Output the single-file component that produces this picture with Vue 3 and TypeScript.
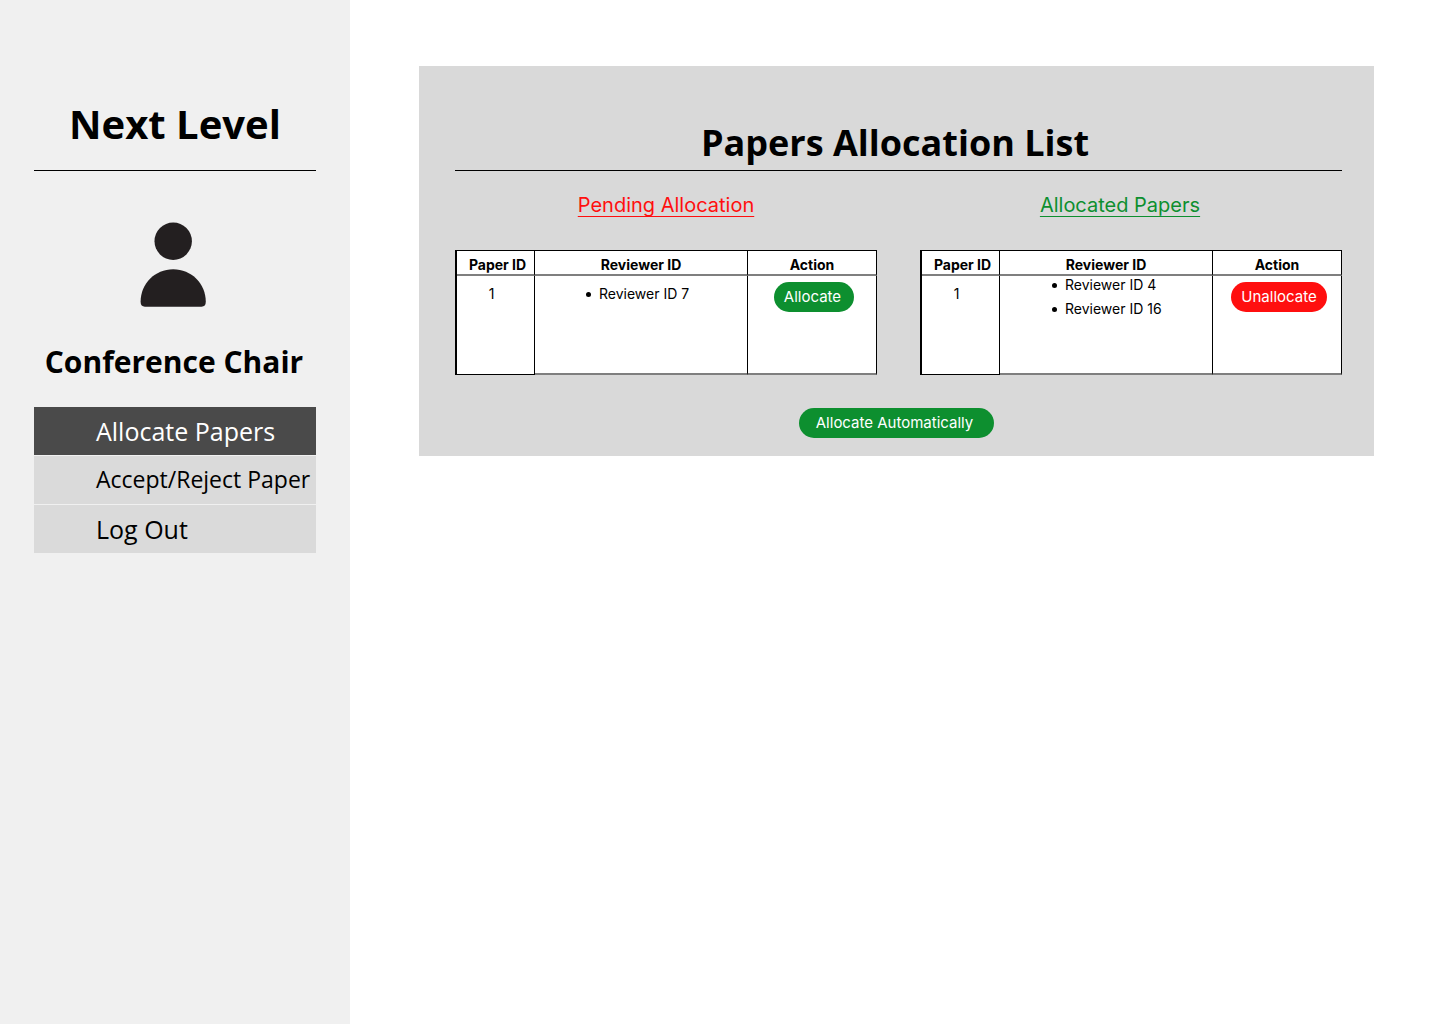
<script setup lang="ts">
import { ref } from 'vue'

interface NavItem {
  label: string
  size: 'regular' | 'compact'
}

interface PaperRow {
  paperId: number
  reviewers: string[]
}

interface AllocationTable {
  key: 'pending' | 'allocated'
  title: string
  action: string
  rows: PaperRow[]
}

const navItems: NavItem[] = [
  { label: 'Allocate Papers', size: 'regular' },
  { label: 'Accept/Reject Paper', size: 'compact' },
  { label: 'Log Out', size: 'regular' },
]
const active = ref('Allocate Papers')

const tables: AllocationTable[] = [
  {
    key: 'pending',
    title: 'Pending Allocation',
    action: 'Allocate',
    rows: [{ paperId: 1, reviewers: ['Reviewer ID 7'] }],
  },
  {
    key: 'allocated',
    title: 'Allocated Papers',
    action: 'Unallocate',
    rows: [{ paperId: 1, reviewers: ['Reviewer ID 4', 'Reviewer ID 16'] }],
  },
]
</script>

<template>
  <div class="layout">
    <aside class="sidebar">
      <h1 class="brand">Next Level</h1>
      <svg class="avatar" viewBox="0 0 66 85" aria-hidden="true">
        <circle cx="33.2" cy="19.2" r="18.7" />
        <path d="M0.600 79.800C0.600 61.500 15 47.200 33.200 47.200S65.800 61.500 65.800 79.800Q65.800 84.700 61.500 84.700H4.900Q0.600 84.700 0.600 79.800Z" />
      </svg>
      <p class="role">Conference Chair</p>
      <nav class="nav">
        <a
          v-for="item in navItems"
          :key="item.label"
          href="#"
          class="nav-link"
          :class="[item.size, { active: item.label === active }]"
          @click.prevent="active = item.label"
        >{{ item.label }}</a>
      </nav>
    </aside>

    <main class="main">
      <section class="panel">
        <h2 class="panel-title">Papers Allocation List</h2>
        <div class="columns">
          <div v-for="table in tables" :key="table.key" class="column" :class="table.key">
            <h3 :id="table.key" class="column-title">{{ table.title }}</h3>
            <table class="papers" :aria-labelledby="table.key">
              <thead>
                <tr>
                  <th class="paper">Paper ID</th>
                  <th class="reviewer">Reviewer ID</th>
                  <th class="action">Action</th>
                </tr>
              </thead>
              <tbody>
                <tr v-for="row in table.rows" :key="row.paperId">
                  <td class="paper">{{ row.paperId }}</td>
                  <td class="reviewer">
                    <ul class="reviewers">
                      <li v-for="name in row.reviewers" :key="name">{{ name }}</li>
                    </ul>
                  </td>
                  <td class="action">
                    <button type="button" class="pill">{{ table.action }}</button>
                  </td>
                </tr>
              </tbody>
            </table>
          </div>
        </div>
        <button type="button" class="pill auto">Allocate Automatically</button>
      </section>
    </main>
  </div>
</template>

<style>
body {
  margin: 0;
  background: #fff;
}
</style>

<style scoped>
.layout {
  display: flex;
  min-height: 100vh;
  color: #000;
  font-family: Inter, sans-serif;
}

h1,
h2,
h3,
p,
ul {
  margin: 0;
}

.sidebar {
  box-sizing: border-box;
  flex: 0 0 350px;
  padding: 96px 34px 0;
  background: #f0f0f0;
  font-family: 'Open Sans', sans-serif;
  text-align: center;
}

.brand {
  padding-bottom: 18px;
  border-bottom: 1px solid #000;
  font-size: 40px;
  font-weight: 700;
  line-height: 56px;
}

.avatar {
  display: block;
  width: 66px;
  height: 85px;
  margin: 51px auto 0;
  padding-right: 4px;
  fill: #231f20;
}

.role {
  margin-top: 34px;
  padding-right: 2px;
  font-size: 30px;
  font-weight: 700;
  line-height: 42px;
  white-space: nowrap;
}

.nav {
  display: flex;
  flex-direction: column;
  gap: 1px;
  margin-top: 24px;
}

.nav-link {
  padding-left: 62px;
  background: #dadada;
  color: #000;
  line-height: 48px;
  text-align: left;
  text-decoration: none;
  white-space: nowrap;
}

.nav-link.regular {
  font-size: 25px;
}

.nav-link.compact {
  padding-bottom: 2px;
  font-size: 23px;
  line-height: 46px;
}

.nav-link.active {
  background: #4a4a4a;
  color: #fff;
}

.main {
  flex: 1;
  min-width: 0;
  padding: 66px 66px 66px 69px;
}

.panel {
  display: flex;
  flex-direction: column;
  padding: 50px 32px 18px 36px;
  background: #d9d9d9;
}

.panel-title {
  padding: 2px 7px 2px 0;
  border-bottom: 1px solid #000;
  font-family: 'Open Sans', sans-serif;
  font-size: 36px;
  font-weight: 700;
  line-height: 50px;
  text-align: center;
}

.columns {
  display: flex;
  gap: 43px;
  margin-top: 22px;
}

.column {
  flex: 1;
  min-width: 0;
}

.column-title {
  margin-bottom: 33px;
  font-size: 20px;
  font-weight: 400;
  line-height: 24px;
  text-align: center;
  text-decoration: underline;
  text-decoration-skip-ink: none;
  text-decoration-thickness: 1px;
  text-underline-offset: 4px;
}

.pending .column-title {
  color: #ff0f0f;
}

.allocated .column-title {
  padding-right: 22px;
  color: #0d8f2f;
}

.papers {
  width: 100%;
  table-layout: fixed;
  border-spacing: 0;
  border-top: 1px solid #000;
  border-left: 2px solid #000;
  background: #fff;
  font-size: 14px;
  line-height: 24px;
}

.papers th,
.papers td {
  box-sizing: border-box;
  padding: 0;
  border-right: 1px solid #000;
  text-align: center;
  vertical-align: top;
}

.papers th {
  height: 25px;
  padding-top: 5px;
  border-bottom: 2px solid #7f7f7f;
  font-weight: 700;
  line-height: 18px;
}

.papers td {
  height: 99px;
  border-bottom: 2px solid #7f7f7f;
}

.papers td.paper {
  padding: 6px 8px 0 0;
  border-bottom: 1px solid #000;
}

.papers th.paper {
  width: 78px;
  padding-left: 4px;
}

.papers th.action {
  width: 129px;
}

.reviewers {
  padding-left: 51px;
  list-style: none;
}

.reviewers li {
  display: flex;
  align-items: center;
  gap: 8px;
}

.reviewers li::before {
  width: 5px;
  height: 5px;
  border-radius: 50%;
  background: #000;
  content: '';
}

.pending .reviewers {
  padding-top: 6px;
}

.allocated .reviewers {
  margin-top: -3px;
  padding-left: 52px;
}

.papers td.action {
  padding: 6px 0 0 4px;
}

.pill {
  height: 30px;
  padding: 0 13px 0 10px;
  border: 0;
  border-radius: 15px;
  background: #0d8f2f;
  color: #fff;
  font-family: inherit;
  font-size: 15px;
  line-height: 30px;
  white-space: nowrap;
  vertical-align: top;
  cursor: pointer;
}

.allocated .pill {
  padding: 0 10px;
  background: #ff0f0f;
}

.pill.auto {
  align-self: center;
  margin: 33px 4px 0 0;
  padding: 0 21px 0 17px;
}
</style>
